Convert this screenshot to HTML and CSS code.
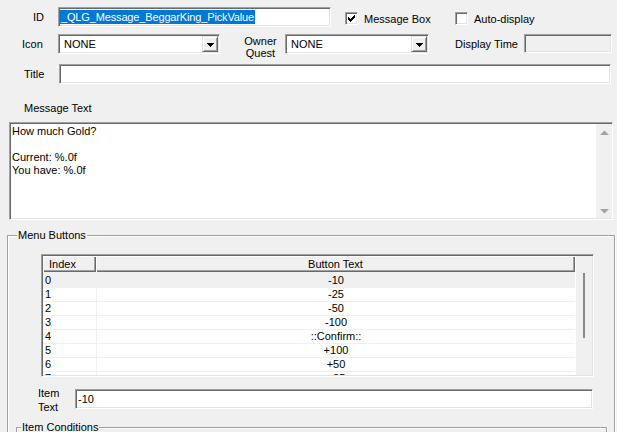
FILE: index.html
```html
<!DOCTYPE html>
<html>
<head>
<meta charset="utf-8">
<title>Message</title>
<link rel="stylesheet" href="styles.css">
</head>
<body>
<div class="form">
  <div class="row r1">
    <label class="lbl lbl-id">ID</label>
    <div class="field sunken id-field"><span class="sel">_QLG_Message_BeggarKing_PickValue</span></div>
    <div class="chk chk-msg">
      <span class="box sunken">
        <svg width="7" height="7" viewBox="0 0 7 7"><g fill="#000"><rect x="0" y="2" width="1" height="3"/><rect x="1" y="3" width="1" height="3"/><rect x="2" y="4" width="1" height="3"/><rect x="3" y="3" width="1" height="3"/><rect x="4" y="2" width="1" height="3"/><rect x="5" y="1" width="1" height="3"/><rect x="6" y="0" width="1" height="3"/></g></svg>
      </span>
      <span>Message Box</span>
    </div>
    <div class="chk">
      <span class="box sunken"></span>
      <span>Auto-display</span>
    </div>
  </div>

  <div class="row r2">
    <label class="lbl lbl-icon">Icon</label>
    <div class="combo sunken c1">
      <span class="ctext">NONE</span>
      <span class="cbtn"><svg width="7" height="4" viewBox="0 0 7 4"><g fill="#000"><rect x="0" y="0" width="7" height="1"/><rect x="1" y="1" width="5" height="1"/><rect x="2" y="2" width="3" height="1"/><rect x="3" y="3" width="1" height="1"/></g></svg></span>
    </div>
    <label class="lbl lbl-owner">Owner<br>Quest</label>
    <div class="combo sunken c2">
      <span class="ctext">NONE</span>
      <span class="cbtn"><svg width="7" height="4" viewBox="0 0 7 4"><g fill="#000"><rect x="0" y="0" width="7" height="1"/><rect x="1" y="1" width="5" height="1"/><rect x="2" y="2" width="3" height="1"/><rect x="3" y="3" width="1" height="1"/></g></svg></span>
    </div>
    <label class="lbl lbl-time">Display Time</label>
    <div class="field sunken disabled time-field"></div>
  </div>

  <div class="row r3">
    <label class="lbl lbl-title">Title</label>
    <div class="field sunken title-field"></div>
  </div>

  <div class="lbl lbl-msg">Message Text</div>
  <div class="memo sunken">
    <div class="memo-text">How much Gold?<br><br>Current: %.0f<br>You have: %.0f</div>
    <div class="vscroll">
      <svg width="9" height="5" viewBox="0 0 9 5"><polygon points="0,5 4.5,0.5 9,5" fill="#a3a3a3"/></svg>
      <svg width="9" height="5" viewBox="0 0 9 5"><polygon points="0,0 4.5,4.5 9,0" fill="#a3a3a3"/></svg>
    </div>
  </div>

  <div class="group menu-group">
    <div class="group-title">Menu Buttons</div>
    <div class="list sunken">
      <div class="list-body">
        <div class="list-head">
          <div class="hcell h-idx">Index</div>
          <div class="hcell h-txt">Button Text</div>
        </div>
        <div class="lrow first"><div class="c-idx">0</div><div class="c-txt">-10</div></div>
        <div class="lrow"><div class="c-idx">1</div><div class="c-txt">-25</div></div>
        <div class="lrow"><div class="c-idx">2</div><div class="c-txt">-50</div></div>
        <div class="lrow"><div class="c-idx">3</div><div class="c-txt">-100</div></div>
        <div class="lrow"><div class="c-idx">4</div><div class="c-txt">::Confirm::</div></div>
        <div class="lrow"><div class="c-idx">5</div><div class="c-txt">+100</div></div>
        <div class="lrow"><div class="c-idx">6</div><div class="c-txt">+50</div></div>
        <div class="lrow"><div class="c-idx">7</div><div class="c-txt">+25</div></div>
      </div>
      <div class="list-scroll"><div class="thumb"></div></div>
    </div>
    <div class="row item-row">
      <label class="lbl lbl-item">Item<br>Text</label>
      <div class="field sunken item-field">-10</div>
    </div>
    <div class="group cond-group">
      <div class="group-title">Item Conditions</div>
    </div>
  </div>
</div>
</body>
</html>
```
FILE: styles.css
```css
html, body {
  margin: 0;
  padding: 0;
  width: 617px;
  height: 432px;
  overflow: hidden;
  background: #f0f0f0;
}
body {
  font-family: "Liberation Sans", Arial, sans-serif;
  font-size: 11px;
  color: #000;
}
.form {
  padding-top: 7px;
}
.row {
  display: flex;
  align-items: center;
  height: 20px;
}
.lbl {
  line-height: 13px;
  white-space: nowrap;
  box-sizing: border-box;
  flex: none;
}
.sunken {
  box-sizing: border-box;
  background: #fff;
  border: 1px solid;
  border-color: #a0a0a0 #fff #fff #a0a0a0;
  box-shadow: inset 1px 1px 0 #696969, inset -1px -1px 0 #e3e3e3;
}
.field {
  height: 20px;
  flex: none;
  display: flex;
  align-items: center;
}
.disabled {
  background: #f0f0f0;
}

/* row 1 */
.lbl-id {
  width: 58px;
  padding-left: 33px;
}
.id-field {
  width: 273px;
}
.sel {
  margin-left: 1px;
  padding: 0 1px;
  line-height: 14px;
  background: #0078d7;
  color: #fff;
  letter-spacing: -0.15px;
}
.chk {
  display: flex;
  align-items: center;
  margin-top: 3px;
  flex: none;
}
.chk-msg {
  width: 110px;
  margin-left: 14px;
}
.box {
  width: 13px;
  height: 13px;
  margin-right: 6px;
  display: flex;
  align-items: center;
  justify-content: center;
  flex: none;
}
.box svg {
  display: block;
}

/* row 2 */
.r2 {
  margin-top: 7px;
}
.lbl-icon {
  width: 58px;
  padding-left: 22px;
}
.combo {
  height: 20px;
  display: flex;
  align-items: center;
  flex: none;
}
.c1 {
  width: 162px;
}
.c2 {
  width: 144px;
}
.ctext {
  padding-left: 5px;
  flex: 1;
}
.cbtn {
  width: 16px;
  height: 16px;
  margin-right: 1px;
  box-sizing: border-box;
  background: #f0f0f0;
  border: 1px solid;
  border-color: #e3e3e3 #696969 #696969 #e3e3e3;
  box-shadow: inset 1px 1px 0 #fff, inset -1px -1px 0 #a0a0a0;
  display: flex;
  align-items: center;
  justify-content: center;
}
.cbtn svg {
  display: block;
  margin-top: 1px;
}
.lbl-owner {
  width: 65px;
  padding-left: 16px;
  text-align: center;
  line-height: 12px;
  align-self: flex-start;
  margin-top: 1px;
}
.lbl-time {
  width: 69px;
  margin-left: 26px;
}
.time-field {
  width: 88px;
  height: 19px;
  align-self: flex-start;
}

/* row 3 */
.r3 {
  margin-top: 10px;
}
.lbl-title {
  width: 59px;
  padding-left: 24px;
}
.title-field {
  width: 552px;
}

/* message text */
.lbl-msg {
  margin-top: 18px;
  padding-left: 24px;
  height: 13px;
}
.memo {
  margin: 7px 0 0 9px;
  width: 604px;
  height: 98px;
  display: flex;
}
.memo-text {
  flex: 1;
  padding: 2px 0 0 2px;
  line-height: 13px;
}
.vscroll {
  width: 16px;
  margin: 1px 0 1px 0;
  background: #f0f0f0;
  display: flex;
  flex-direction: column;
  justify-content: space-between;
  align-items: center;
  padding: 6px 0 4px;
  box-sizing: border-box;
}
.vscroll svg {
  display: block;
}

/* group boxes */
.group {
  box-sizing: border-box;
  border: 1px solid #a0a0a0;
  box-shadow: inset 1px 1px 0 #fff, 1px 1px 0 #fff;
}
.group-title {
  width: fit-content;
  height: 13px;
  line-height: 13px;
  padding: 0 1px;
  background: #f0f0f0;
}
.menu-group {
  margin: 15px 0 0 7px;
  width: 608px;
  height: 260px;
}
.menu-group > .group-title {
  margin: -7px 0 0 9px;
}

/* list */
.list {
  margin: 12px 0 0 33px;
  width: 553px;
  height: 123px;
  padding: 1px;
  display: flex;
}
.list-body {
  width: 532px;
  height: 119px;
  overflow: hidden;
  flex: none;
}
.list-head {
  display: flex;
  height: 16px;
}
.hcell {
  box-sizing: border-box;
  height: 16px;
  line-height: 16px;
  background: #f0f0f0;
  box-shadow: inset 1px 1px 0 #fff, inset -1px -1px 0 #696969, inset -2px -2px 0 #a0a0a0;
}
.h-idx {
  width: 53px;
  padding-left: 6px;
}
.h-txt {
  width: 479px;
  text-align: center;
}
.lrow {
  display: flex;
  height: 13px;
  line-height: 13px;
  border-bottom: 1px solid #f0f0f0;
  background: #fff;
}
.lrow.first {
  height: 13px;
  padding-top: 2px;
  background: #f0f0f0;
}
.c-idx {
  width: 51px;
  padding-left: 2px;
  border-right: 1px solid #f0f0f0;
  flex: none;
}
.c-txt {
  flex: 1;
  text-align: center;
}
.list-scroll {
  width: 17px;
  box-sizing: border-box;
  background: #f0f0f0;
  border-left: 1px solid #fff;
  padding: 17px 0 0 7px;
  flex: none;
}
.thumb {
  width: 2px;
  height: 65px;
  background: #8a8a8a;
}

/* item text */
.item-row {
  margin-top: 12px;
}
.lbl-item {
  width: 37px;
  margin-left: 30px;
  margin-top: 2px;
  line-height: 14px;
}
.item-field {
  width: 518px;
  padding-left: 2px;
}

/* item conditions */
.cond-group {
  margin: 18px 7px 0 8px;
  height: 100px;
}
.cond-group > .group-title {
  margin: -7px 0 0 4px;
}
```
